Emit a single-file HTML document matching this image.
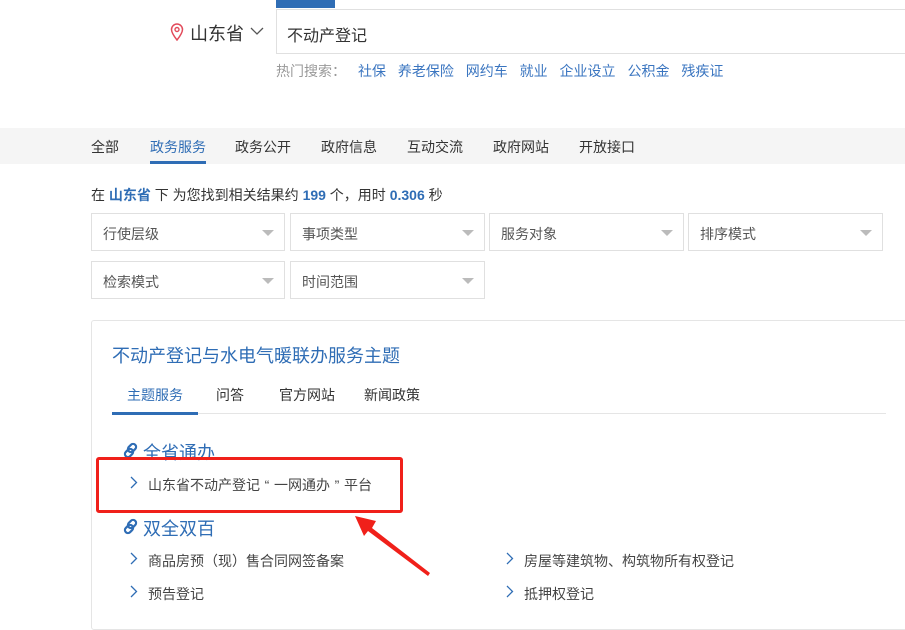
<!DOCTYPE html>
<html><head><meta charset="utf-8"><style>
*{margin:0;padding:0;box-sizing:border-box}
body{width:905px;height:617px;overflow:hidden;background:#fff;font-family:"Liberation Sans","Noto Sans CJK SC",sans-serif;color:#333;position:relative}
.a{position:absolute;white-space:nowrap}
.blue{color:#2f6db5}
.dd{position:absolute;height:38px;border:1px solid #e0e0e0;font-size:14px;color:#555;padding:10px 11px}
.dd:after{content:"";position:absolute;right:10px;top:16px;border-left:6px solid transparent;border-right:6px solid transparent;border-top:6px solid #bbb}
.chev{position:absolute}
.q{display:inline-block;width:14px;text-align:center}
</style></head><body>
<div class="a" style="left:276px;top:0;width:59px;height:8px;background:#2f6db5"></div>
<div class="a" style="left:276px;top:9px;width:640px;height:45px;border:1px solid #e0e0e0"></div>
<svg class="a" style="left:170px;top:23px" width="14" height="18" viewBox="0 0 14 18"><path d="M7 17C3 12 1.5 9 1.5 6.5A5.5 5.5 0 0 1 12.5 6.5C12.5 9 11 12 7 17Z" fill="none" stroke="#e24b5b" stroke-width="1.5"/><circle cx="7" cy="6.5" r="2" fill="none" stroke="#e24b5b" stroke-width="1.4"/></svg>
<div class="a" style="left:190px;top:20px;font-size:18px;color:#333">山东省</div>
<svg class="a" style="left:250px;top:27px" width="14" height="9"><path d="M1 1L7 7L13 1" fill="none" stroke="#555" stroke-width="1.3"/></svg>
<div class="a" style="left:287px;top:22px;font-size:16px;color:#333">不动产登记</div>
<div class="a" style="left:276px;top:61px;font-size:14px;color:#999">热门搜索：</div>
<div class="a" style="left:358px;top:61px;font-size:14px;color:#3a75c0;word-spacing:8px">社保 养老保险 网约车 就业 企业设立 公积金 残疾证</div>
<div class="a" style="left:0;top:128px;width:905px;height:36px;background:#f5f5f5"></div>
<div class="a" style="left:91px;top:137px;font-size:14px;color:#333">全部</div>
<div class="a blue" style="left:150px;top:137px;font-size:14px">政务服务</div>
<div class="a" style="left:150px;top:161px;width:56px;height:3px;background:#2f6db5"></div>
<div class="a" style="left:235px;top:137px;font-size:14px">政务公开</div>
<div class="a" style="left:321px;top:137px;font-size:14px">政府信息</div>
<div class="a" style="left:407px;top:137px;font-size:14px">互动交流</div>
<div class="a" style="left:493px;top:137px;font-size:14px">政府网站</div>
<div class="a" style="left:579px;top:137px;font-size:14px">开放接口</div>
<div class="a" style="left:91px;top:185px;font-size:14px">在 <b class="blue">山东省</b> 下 为您找到相关结果约 <b class="blue">199</b> 个，用时 <b class="blue">0.306</b> 秒</div>
<div class="dd" style="left:91px;top:213px;width:194px">行使层级</div>
<div class="dd" style="left:290px;top:213px;width:195px">事项类型</div>
<div class="dd" style="left:489px;top:213px;width:195px">服务对象</div>
<div class="dd" style="left:688px;top:213px;width:195px">排序模式</div>
<div class="dd" style="left:91px;top:261px;width:194px">检索模式</div>
<div class="dd" style="left:290px;top:261px;width:195px">时间范围</div>
<div class="a" style="left:91px;top:320px;width:830px;height:310px;border:1px solid #e5e5e5;border-radius:3px"></div>
<div class="a blue" style="left:112px;top:342px;font-size:18px">不动产登记与水电气暖联办服务主题</div>
<div class="a blue" style="left:127px;top:385px;font-size:14px">主题服务</div>
<div class="a" style="left:216px;top:385px;font-size:14px">问答</div>
<div class="a" style="left:279px;top:385px;font-size:14px">官方网站</div>
<div class="a" style="left:364px;top:385px;font-size:14px">新闻政策</div>
<div class="a" style="left:112px;top:413px;width:774px;height:1px;background:#e5e5e5"></div>
<div class="a" style="left:112px;top:412px;width:86px;height:3px;background:#2f6db5"></div>
<svg class="a" style="left:122px;top:442px" width="17" height="17" viewBox="0 0 17 17"><g fill="none" stroke="#2f6db5" stroke-width="2.2"><rect x="7" y="1.5" width="6" height="9" rx="3" transform="rotate(45 10 6)"/><rect x="4" y="6.5" width="6" height="9" rx="3" transform="rotate(45 7 11)"/></g></svg>
<div class="a blue" style="left:143px;top:439px;font-size:18px">全省通办</div>
<svg class="chev" style="left:130px;top:476px" width="8" height="13"><path d="M1 1L6.5 6.5L1 12" fill="none" stroke="#2f6db5" stroke-width="1.3"/></svg>
<div class="a" style="left:148px;top:475px;font-size:14px;color:#444">山东省不动产登记<span class="q">“</span>一网通办<span class="q">”</span>平台</div>
<div class="a" style="left:96px;top:457px;width:307px;height:56px;border:3px solid #f0201a;border-radius:3px"></div>
<svg class="a" style="left:122px;top:518px" width="17" height="17" viewBox="0 0 17 17"><g fill="none" stroke="#2f6db5" stroke-width="2.2"><rect x="7" y="1.5" width="6" height="9" rx="3" transform="rotate(45 10 6)"/><rect x="4" y="6.5" width="6" height="9" rx="3" transform="rotate(45 7 11)"/></g></svg>
<div class="a blue" style="left:143px;top:515px;font-size:18px">双全双百</div>
<svg class="chev" style="left:130px;top:552px" width="8" height="13"><path d="M1 1L6.5 6.5L1 12" fill="none" stroke="#2f6db5" stroke-width="1.3"/></svg>
<div class="a" style="left:148px;top:551px;font-size:14px;color:#444">商品房预（现）售合同网签备案</div>
<svg class="chev" style="left:130px;top:585px" width="8" height="13"><path d="M1 1L6.5 6.5L1 12" fill="none" stroke="#2f6db5" stroke-width="1.3"/></svg>
<div class="a" style="left:148px;top:584px;font-size:14px;color:#444">预告登记</div>
<svg class="chev" style="left:506px;top:552px" width="8" height="13"><path d="M1 1L6.5 6.5L1 12" fill="none" stroke="#2f6db5" stroke-width="1.3"/></svg>
<div class="a" style="left:524px;top:551px;font-size:14px;color:#444">房屋等建筑物、构筑物所有权登记</div>
<svg class="chev" style="left:506px;top:585px" width="8" height="13"><path d="M1 1L6.5 6.5L1 12" fill="none" stroke="#2f6db5" stroke-width="1.3"/></svg>
<div class="a" style="left:524px;top:584px;font-size:14px;color:#444">抵押权登记</div>
<svg class="a" style="left:350px;top:508px" width="90" height="70"><path d="M80 65L22 20L26 13L5 8L14 28L18 23L78 68Z" fill="#f0201a"/></svg>
</body></html>
